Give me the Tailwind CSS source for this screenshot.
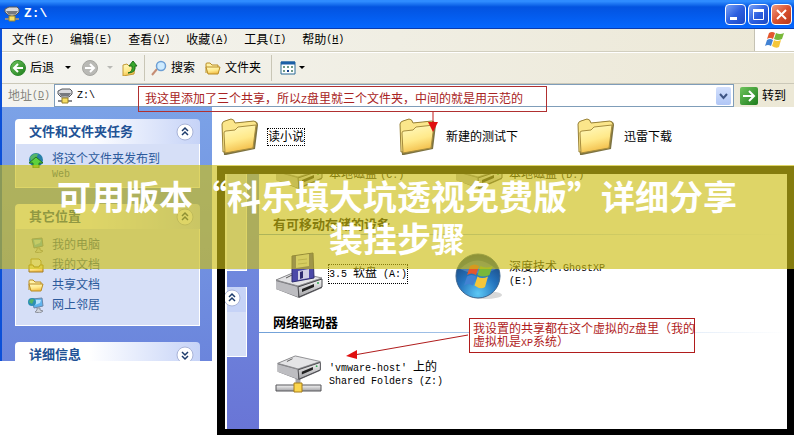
<!DOCTYPE html>
<html lang="zh-CN">
<head>
    <meta charset="UTF-8">
    <meta name="viewport" content="width=device-width, initial-scale=1.0">
    <title>Z:\</title>
    <script src="https://cdn.jsdelivr.net/npm/@tailwindcss/browser@4"></script>
</head>
<body class="relative min-h-screen overflow-hidden bg-white font-['Liberation_Sans','Noto_Sans_CJK_SC',sans-serif] text-xs leading-4 text-black">
    <!-- shared icons -->
    <svg class="absolute size-0" aria-hidden="true">
        <defs>
            <linearGradient id="gold" x1="0" y1="0" x2="0.3" y2="1"><stop offset="0" stop-color="#fffbc4"/><stop offset="0.6" stop-color="#ffe98a"/><stop offset="1" stop-color="#f3c04d"/></linearGradient>
            <linearGradient id="metal" x1="0" y1="0" x2="0" y2="1"><stop offset="0" stop-color="#f4f4f4"/><stop offset="1" stop-color="#a2a2a6"/></linearGradient>
            <linearGradient id="green" x1="0" y1="0" x2="1" y2="1"><stop offset="0" stop-color="#6fc45c"/><stop offset="1" stop-color="#1c7c1c"/></linearGradient>
            <radialGradient id="orb" cx="0.5" cy="0.9" r="0.9"><stop offset="0" stop-color="#5cc8f5"/><stop offset="0.5" stop-color="#2473bd"/><stop offset="1" stop-color="#1b3f73"/></radialGradient>
        </defs>
        <symbol id="folder" viewBox="0 0 40 40">
            <path d="M4 38 2 8Q2 5 5 4L11 2Q14 2 15 6L35 4Q38 5 38 8L35 32 6 38Z" fill="#7d7342"/>
            <path d="M3 35 2 7Q3 4 5 4L11 2Q14 2 15 6L34 4Q37 5 37 8L35 12 33 31Z" fill="#fbe68b" stroke="#9a8338"/>
            <path d="M5 36 4 16Q4 14 6 14L15 13 18 10 36 8 33 31Z" fill="url(#gold)" stroke="#a78d3e"/>
        </symbol>
        <symbol id="folder-sm" viewBox="0 0 16 16">
            <path d="M1 13V4Q1 3 2 3H5L7 5H13V7" fill="#fff2a8" stroke="#b98c24"/>
            <path d="M3 14 1 7H12L15 7 13 14Z" fill="url(#gold)" stroke="#b98c24"/>
        </symbol>
        <symbol id="drive" viewBox="0 0 48 28">
            <path d="M1 9 20 1 47 8V17L24 27 1 18Z" fill="#6d6d72"/>
            <path d="M1 9 20 1 47 7 23 15Z" fill="#e4e4e6" stroke="#8d8d90"/>
            <path d="M11 7 17 4" stroke="#555" stroke-width="1"/>
            <path d="M1 10 23 16V26L1 18Z" fill="#bdbdc1"/>
            <path d="M23 16 47 8V16L24 26Z" fill="url(#metal)" stroke="#4a4a4e"/>
            <path d="M27 18 39 13V16L27 21Z" fill="#222"/>
            <circle cx="43" cy="12" r="1" fill="#35a853"/>
        </symbol>
        <symbol id="net-drive" viewBox="0 0 16 16">
            <path d="M1 3 5 1H13L15 3V6L12 9H4L1 6Z" fill="#d9d9dc" stroke="#55585d"/>
            <path d="M2 5H14L12 8H4Z" fill="#77797e"/>
            <path d="M8 8V12" stroke="#aaa" stroke-width="3"/>
            <path d="M1 13H15" stroke="#8b8b90" stroke-width="2"/>
            <path d="M5 10H11V15H5Z" fill="#f7df65" stroke="#98822b"/>
        </symbol>
        <symbol id="chevrons" viewBox="0 0 18 18">
            <circle cx="9" cy="9" r="8" fill="#fff" stroke="#a9b4d8"/>
            <path d="M6 8 9 5 12 8M6 12 9 9 12 12" fill="none" stroke="#1d3b6b" stroke-width="1.5"/>
        </symbol>
        <symbol id="monitor" viewBox="0 0 16 16">
            <path d="M4 2 14 1 15 9 6 11Z" fill="#60b4ee" stroke="#6a86a8"/>
            <path d="M6 3 13 3 12 6 7 8Z" fill="#b5e2fb"/>
            <path d="M9 11H12V13L15 14 12 16 7 15 9 13Z" fill="#cfd3dc" stroke="#8d919c"/>
        </symbol>
        <symbol id="flag" viewBox="0 0 20 18">
            <path d="M4 2Q7 0 10 2L8 8Q5 6 2 8Z" fill="#e4572e"/>
            <path d="M11 2Q15 4 19 2L17 8Q13 10 9 8Z" fill="#79b83a"/>
            <path d="M2 9Q5 7 8 9L6 15Q3 13 0 15Z" fill="#4282d3"/>
            <path d="M9 9Q12 11 16 9L14 16Q11 18 7 15Z" fill="#f5c63a"/>
        </symbol>
    </svg>

    <!-- back window -->
    <main>
        <header class="flex h-[29px] items-center gap-1 border-b border-[#0a3bb0] bg-linear-to-b from-[#2f8cff] from-5% via-[#0353e0] via-25% to-[#0567ff] pr-0.5 pl-1">
            <svg class="size-4"><use href="#net-drive"/></svg>
            <h1 class="flex-1 font-['Liberation_Mono',monospace] text-[13px] font-bold text-white">Z:\</h1>
            <div class="flex gap-0.5">
                <button aria-label="最小化" class="size-[21px] rounded-sm border border-white bg-linear-to-br from-[#7aa1f5] via-[#2d5fe0] to-[#1c48c4]">
                    <svg viewBox="0 0 19 19"><path d="M4 13.500H11" stroke="#fff" stroke-width="3"/></svg>
                </button>
                <button aria-label="最大化" class="size-[21px] rounded-sm border border-white bg-linear-to-br from-[#7aa1f5] via-[#2d5fe0] to-[#1c48c4]">
                    <svg viewBox="0 0 19 19"><path d="M4.500 5V14.500H14.500V5" fill="none" stroke="#fff"/><path d="M4 5.500H15" stroke="#fff" stroke-width="3"/></svg>
                </button>
                <button aria-label="关闭" class="size-[21px] rounded-sm border border-white bg-linear-to-br from-[#ee9a80] via-[#d9512f] to-[#b8371c]">
                    <svg viewBox="0 0 19 19"><path d="M5 5 14 14M14 5 5 14" stroke="#fff" stroke-width="2"/></svg>
                </button>
            </div>
        </header>

        <div class="border-l-2 border-[#0b50d8] bg-linear-to-r from-[#f4f4f0] to-[#ece8d6]">
            <nav class="flex h-[23px] items-stretch border-b border-[#d2cfbf]">
                <div class="flex flex-1 items-center gap-4 pl-[10px]">
                    <button class="flex items-center">文件<span class="font-['Liberation_Mono',monospace] text-[10px]">(<u>F</u>)</span></button>
                    <button class="flex items-center">编辑<span class="font-['Liberation_Mono',monospace] text-[10px]">(<u>E</u>)</span></button>
                    <button class="flex items-center">查看<span class="font-['Liberation_Mono',monospace] text-[10px]">(<u>V</u>)</span></button>
                    <button class="flex items-center">收藏<span class="font-['Liberation_Mono',monospace] text-[10px]">(<u>A</u>)</span></button>
                    <button class="flex items-center">工具<span class="font-['Liberation_Mono',monospace] text-[10px]">(<u>T</u>)</span></button>
                    <button class="flex items-center">帮助<span class="font-['Liberation_Mono',monospace] text-[10px]">(<u>H</u>)</span></button>
                </div>
                <div class="flex w-10 items-center justify-center border-l border-[#c5c2b4] bg-white">
                    <svg class="h-[18px] w-5"><use href="#flag"/></svg>
                </div>
            </nav>

            <div class="flex h-8 items-center border-t border-b border-t-white border-b-[#cbc8b8] pl-2">
                <button class="flex items-center gap-1">
                    <svg class="size-4" viewBox="0 0 16 16"><circle cx="8" cy="8" r="7.500" fill="url(#green)" stroke="#2f8a2f"/><path d="M13 8H4M8 4 4 8 8 12" fill="none" stroke="#fff" stroke-width="2"/></svg>
                    后退
                    <svg class="ml-1.5 size-2" viewBox="0 0 8 8"><path d="M1 2H7L4 5Z"/></svg>
                </button>
                <button aria-label="前进" class="ml-2.5 flex items-center gap-2">
                    <svg class="size-4" viewBox="0 0 16 16"><circle cx="8" cy="8" r="7.500" fill="#b9b9b5" stroke="#a5a5a0"/><path d="M3 8H12M8 4 12 8 8 12" fill="none" stroke="#fff" stroke-width="2"/></svg>
                    <svg class="size-2" viewBox="0 0 8 8"><path d="M1 2H7L4 5Z" fill="#b9b9b5"/></svg>
                </button>
                <button aria-label="向上" class="ml-2">
                    <svg class="size-4" viewBox="0 0 16 16"><path d="M1 5 5 4 7 6 13 5 12 14 1 16Z" fill="url(#gold)" stroke="#c39a35"/><path d="M6 13Q11 12 10 6H7L11 1 15 6H13Q14 13 6 13Z" fill="#38a82c" stroke="#1d6f1b"/></svg>
                </button>
                <div class="mx-1.5 h-[26px] w-px bg-[#c9c6b6]"></div>
                <button class="flex items-center gap-1">
                    <svg class="size-4" viewBox="0 0 16 16"><path d="M1 15 6 9" stroke="#c58d74" stroke-width="2"/><circle cx="10" cy="6" r="4.500" fill="#cdebff" stroke="#6d9fd4" stroke-width="1.500"/></svg>
                    搜索
                </button>
                <button class="ml-2.5 flex items-center gap-1">
                    <svg class="size-4"><use href="#folder-sm"/></svg>
                    文件夹
                </button>
                <div class="mr-2 ml-2.5 h-[26px] w-px bg-[#c9c6b6]"></div>
                <button aria-label="查看方式" class="flex items-center gap-0.5">
                    <svg class="size-4" viewBox="0 0 16 16"><path d="M1 2H15V14H1Z" fill="#fff" stroke="#2a6a96"/><path d="M1 3H15" stroke="#1c5fa6" stroke-width="3"/><path d="M3 7H5M7 7H9M11 7H13M3 11H5M11 11H13" stroke="#6f9a86" stroke-width="2"/><path d="M7 11H9" stroke="#17408c" stroke-width="2"/></svg>
                    <svg class="size-2" viewBox="0 0 8 8"><path d="M1 2H7L4 5Z"/></svg>
                </button>
            </div>

            <form class="flex h-[23px] items-center pr-2 pl-1.5">
                <label for="address" class="flex w-[46px] items-center text-[#85857d]">地址<span class="font-['Liberation_Mono',monospace] text-[10px]">(<u>D</u>)</span></label>
                <div class="flex h-full min-w-0 flex-1 items-center gap-1 border border-[#7f9db9] bg-white px-0.5">
                    <svg class="size-4"><use href="#net-drive"/></svg>
                    <input id="address" type="text" value="Z:\" class="min-w-0 flex-1 font-['Liberation_Mono',monospace] text-[10px] outline-none">
                    <button type="button" aria-label="地址列表" class="h-[18px] w-[15px] rounded-xs bg-linear-to-b from-[#d3e0fd] to-[#b0c6f5]">
                        <svg viewBox="0 0 15 18"><path d="M4 7 7.500 11 11 7" fill="none" stroke="#3f5585" stroke-width="2"/></svg>
                    </button>
                </div>
                <button type="button" class="ml-1.5 flex items-center gap-1">
                    <svg class="size-[18px]" viewBox="0 0 18 18"><rect width="18" height="18" rx="2" fill="url(#green)"/><path d="M3 9H14M9 4 14 9 9 14" fill="none" stroke="#fff" stroke-width="2"/></svg>
                    转到
                </button>
            </form>
        </div>

        <div class="flex items-start">
            <aside class="h-[254px] w-[212px] shrink-0 space-y-4 overflow-hidden border-l-2 border-[#0b50d8] bg-linear-to-b from-[#7ba2e7] to-[#6b85dc] pt-3 pr-3 pl-[13px] text-[#2c5a9c]">
                <section>
                    <h2 class="flex h-[25px] items-center justify-between rounded-t bg-linear-to-r from-white from-40% to-[#c6d3f7] pr-1.5 pl-3.5 text-[13px] font-bold text-[#215295]">文件和文件夹任务<button aria-label="收起"><svg class="size-[18px]"><use href="#chevrons"/></svg></button></h2>
                    <div class="h-[44px] border border-t-0 border-white bg-[#d6dff7] px-3 pt-2">
                        <a href="#" class="flex items-start gap-2 leading-3.5">
                            <svg class="size-4" viewBox="0 0 16 16"><circle cx="8" cy="8" r="7" fill="#2880a8"/><path d="M2 5Q6 0 10 2L8 7 3 9Z" fill="#55b568"/><path d="M8 5 15 11H11V16H5V11H1Z" fill="#5ed13e" stroke="#23761d"/></svg>
                            <span>将这个文件夹发布到<br><span class="font-['Liberation_Mono',monospace] text-[10px] leading-none">Web</span></span>
                        </a>
                    </div>
                </section>
                <section>
                    <h2 class="flex h-[25px] items-center justify-between rounded-t bg-linear-to-r from-white from-40% to-[#c6d3f7] pr-1.5 pl-3.5 text-[13px] font-bold text-[#215295]">其它位置<button aria-label="收起"><svg class="size-[18px]"><use href="#chevrons"/></svg></button></h2>
                    <div class="flex h-[97px] flex-col gap-1 border border-t-0 border-white bg-[#d6dff7] px-3 pt-2">
                        <a href="#" class="flex items-center gap-2"><svg class="size-4"><use href="#monitor"/></svg>我的电脑</a>
                        <a href="#" class="flex items-center gap-2"><svg class="size-4" viewBox="0 0 16 16"><path d="M3 9V2H11L13 4V9" fill="#fff" stroke="#a48a44"/><path d="M1 8H5L6 10H11L12 8H15V15H1Z" fill="url(#gold)" stroke="#a47c22"/></svg>我的文档</a>
                        <a href="#" class="flex items-center gap-2"><svg class="size-4"><use href="#folder-sm"/></svg>共享文档</a>
                        <a href="#" class="flex items-center gap-2"><svg class="size-4" viewBox="0 0 16 16"><use href="#monitor" width="16" height="16"/><circle cx="4" cy="5" r="4" fill="#2c8fb4"/><path d="M1 5Q3 0 6 3L4 7Z" fill="#55b568"/></svg>网上邻居</a>
                    </div>
                </section>
                <section>
                    <h2 class="flex h-[25px] items-center justify-between rounded-t bg-linear-to-r from-white from-40% to-[#c6d3f7] pr-1.5 pl-3.5 text-[13px] leading-4 font-bold text-[#215295]">详细信息<button aria-label="展开"><svg class="size-[18px] rotate-180"><use href="#chevrons"/></svg></button></h2>
                </section>
            </aside>
            <div class="grid grid-cols-[178px_178px_178px] pt-2.5 pl-2">
                <a href="#" class="flex items-center gap-2"><svg class="size-10"><use href="#folder"/></svg><span class="outline-1 outline-dotted">读小说</span></a>
                <a href="#" class="flex items-center gap-2"><svg class="size-10"><use href="#folder"/></svg>新建的测试下</a>
                <a href="#" class="flex items-center gap-2"><svg class="size-10"><use href="#folder"/></svg>迅雷下载</a>
            </div>
        </div>
    </main>

    <!-- front window -->
    <section class="absolute top-[166px] right-0 bottom-0 left-[217px] flex overflow-hidden border-8 border-r-[7px] border-b-[6px] border-black bg-white pl-0.5">
        <aside class="w-8 shrink-0 space-y-4 bg-linear-to-b from-[#7393e2] to-[#6975d6] pr-3">
            <div class="h-[97px] border-r border-b border-white bg-[#d6dff7]"></div>
            <div class="h-[70px] border-r border-b border-white bg-[#d6dff7]">
                <div class="h-[25px] rounded-tr bg-[#c6d3f7] pt-0.5"><button aria-label="收起"><svg class="-ml-1 size-[18px]"><use href="#chevrons"/></svg></button></div>
            </div>
        </aside>
        <div class="min-w-0 flex-1">
            <div class="grid h-4 grid-cols-[180px_180px] content-end overflow-hidden pl-4">
                <a href="#" class="flex items-end gap-1.5"><svg class="h-7 w-12"><use href="#drive"/></svg><span class="mb-1.5">本地磁盘 <span class="font-['Liberation_Mono',monospace] text-[10px]">(C:)</span></span></a>
                <a href="#" class="flex items-end gap-1.5"><svg class="h-7 w-12"><use href="#drive"/></svg><span class="mb-1.5">本地磁盘 <span class="font-['Liberation_Mono',monospace] text-[10px]">(D:)</span></span></a>
            </div>
            <h2 class="mt-[27px] h-[18px] bg-linear-to-r from-[#70a0d8] to-white bg-[length:100%_1px] bg-bottom bg-no-repeat pl-3.5 text-[13px] font-bold">有可移动存储的设备</h2>
            <div class="mt-4 grid h-[50px] grid-cols-[180px_180px] pl-4">
                <a href="#" class="flex items-center gap-1.5">
                    <svg class="h-12 w-12" viewBox="0 0 48 48">
                        <use href="#drive" y="19" width="48" height="28"/>
                        <path d="M17 4 38 1 39 26 17 30Z" fill="#4b49a8" stroke="#2e2c70"/>
                        <path d="M21 4 34 2V14L21 16Z" fill="#e8e8ee"/><path d="M23 8 32 7M23 12 32 11" stroke="#a4a4b0"/>
                        <path d="M23 19 34 17V26L23 28Z" fill="#d0d0e5"/><path d="M25 20 28 19V26L25 27Z" fill="#2e2c70"/>
                    </svg>
                    <span class="-mt-1 outline-1 outline-dotted"><span class="font-['Liberation_Mono',monospace] text-[10px]">3.5 </span>软盘<span class="font-['Liberation_Mono',monospace] text-[10px]"> (A:)</span></span>
                </a>
                <a href="#" class="flex items-center gap-1.5">
                    <svg class="h-12 w-12" viewBox="0 0 48 48">
                        <ellipse cx="30" cy="43" rx="17" ry="4" fill="#d8d8d8"/>
                        <circle cx="23" cy="24" r="22" fill="url(#orb)" stroke="#3a648e"/>
                        <path d="M5 17Q22 0 41 17Q24 26 5 17Z" fill="#fff" fill-opacity="0.2"/>
                        <use href="#flag" x="9" y="11" width="30" height="27"/>
                    </svg>
                    <span class="-mt-1 leading-3">深度技术<span class="font-['Liberation_Mono',monospace] text-[10px] leading-none">.GhostXP<br>(E:)</span></span>
                </a>
            </div>
            <h2 class="mt-[14px] h-[18px] bg-linear-to-r from-[#70a0d8] to-white bg-[length:100%_1px] bg-bottom bg-no-repeat pl-3.5 text-[13px] font-bold">网络驱动器</h2>
            <div class="mt-[22px] pl-4">
                <a href="#" class="flex items-start gap-1.5">
                    <svg class="h-10 w-12" viewBox="0 0 48 40">
                        <path d="M23 22V32" stroke="#a6a6aa" stroke-width="5"/>
                        <use href="#drive" width="48" height="26"/>
                        <path d="M1 30H46V36H1Z" fill="url(#metal)" stroke="#56565a"/>
                        <path d="M19 28H27V37H19Z" fill="#fbd64e" stroke="#a67c18"/>
                    </svg>
                    <span class="pt-1.5 leading-3"><span class="font-['Liberation_Mono',monospace] text-[10px] leading-none">'vmware-host' </span>上的<br><span class="font-['Liberation_Mono',monospace] text-[10px] leading-none">Shared Folders (Z:)</span></span>
                </a>
            </div>
        </div>
    </section>

    <!-- red notes and arrows -->
    <p class="absolute top-[86px] left-[138px] h-[26px] w-[409px] border border-[#b03030] px-1.5 pt-1 whitespace-nowrap text-[#a82222]">我这里添加了三个共享，所以<span class="font-['Liberation_Mono',monospace] text-[10px]">Z</span>盘里就三个文件夹，中间的就是用示范的</p>
    <svg class="absolute top-28 left-[427px] h-5 w-3" viewBox="0 0 12 20"><path d="M6 0V12" stroke="#c01818"/><path d="M1 10H11L6 20Z" fill="#e01010"/></svg>
    <p class="absolute top-[318px] left-[469px] h-[35px] w-[226px] border border-[#b01c1c] bg-white py-1 pl-[3px] leading-3 whitespace-nowrap text-[#b01c1c]">我设置的共享都在这个虚拟的<span class="font-['Liberation_Mono',monospace] text-[10px] leading-none">Z</span>盘里（我的<br>虚拟机是<span class="font-['Liberation_Mono',monospace] text-[10px] leading-none">XP</span>系统）</p>
    <svg class="absolute top-[333px] left-[346px] h-[26px] w-[123px]" viewBox="0 0 123 26"><path d="M8 22 122 2" stroke="#b01c1c"/><path d="M0 23 11 17V26Z" fill="#e01010"/></svg>

    <!-- headline -->
    <div class="absolute inset-x-0 top-[165px] bg-[#ccbe16]/65 px-12 py-[10px] text-center font-['Noto_Sans_CJK_SC',sans-serif] text-[34px] leading-[42px] font-bold text-white">可用版本“科乐填大坑透视免费版”详细分享装挂步骤</div>
</body>
</html>
